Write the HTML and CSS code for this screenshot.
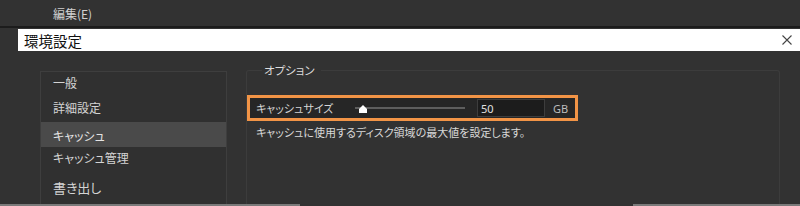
FILE: index.html
```html
<!DOCTYPE html>
<html lang="ja">
<head>
  <meta charset="UTF-8">
  <title>環境設定</title>
  <link rel="stylesheet" href="styles.css">
</head>
<body>
  <div class="menubar">
    <span class="menu-item">編集(E)</span>
  </div>
  <div class="titlebar">
    <span class="title">環境設定</span>
    <svg class="close" width="10" height="10" viewBox="0 0 10 10">
      <path d="M0.5 0.5 L9.5 9.5 M9.5 0.5 L0.5 9.5" stroke="#444" stroke-width="1.1" fill="none"/>
    </svg>
  </div>
  <div class="main">
    <ul class="nav">
      <li>一般</li>
      <li>詳細設定</li>
      <li class="selected">キャッシュ</li>
      <li>キャッシュ管理</li>
      <li class="big">書き出し</li>
    </ul>
    <fieldset class="options">
      <legend>オプション</legend>
      <div class="setting highlight">
        <span class="setting-label">キャッシュサイズ</span>
        <div class="slider">
          <svg class="thumb" width="8" height="8" viewBox="0 0 8 8">
            <polygon points="4,0 8,4 8,8 0,8 0,4" fill="#fff"/>
          </svg>
        </div>
        <input class="value" type="text" value="50">
        <span class="unit">GB</span>
      </div>
      <p class="desc">キャッシュに使用するディスク領域の最大値を設定します。</p>
    </fieldset>
  </div>
  <div class="bottomline">
    <span class="seg left"></span>
    <span class="seg right"></span>
  </div>
</body>
</html>
```

FILE: styles.css
```css
body {
  margin: 0;
  height: 206px;
  overflow: hidden;
  background: #323232;
  font-family: "Noto Sans CJK JP", "Noto Sans", sans-serif;
  font-feature-settings: "palt";
  color: #d4d4d4;
  display: flex;
  flex-direction: column;
}
.menubar {
  height: 26px;
  border-bottom: 2px solid #1c1c1c;
  display: flex;
  align-items: center;
  padding-left: 53px;
  font-size: 12px;
  color: #d0d0d0;
}
.titlebar {
  margin: 1px 0 0 18px;
  height: 22px;
  background: #fff;
  display: flex;
  align-items: center;
  justify-content: space-between;
  padding: 0 8px 0 6px;
}
.title {
  font-size: 14.5px;
  color: #111;
}
.main {
  flex: 1;
  min-height: 0;
  display: flex;
  gap: 19px;
  padding: 12px 20px 0 40px;
}
.nav {
  list-style: none;
  margin: 8px 0 0 0;
  padding: 0;
  width: 185px;
  border: 1px solid #3e3e3e;
  border-bottom: none;
  background: #303030;
  font-size: 12px;
}
.nav li {
  height: 25px;
  line-height: 22px;
  padding-left: 12px;
}
.nav li.selected {
  background: #4a4a4a;
  line-height: 28px;
  color: #e4e4e4;
}
.nav li.big {
  font-size: 13px;
  line-height: 32px;
}
.options {
  flex: 1;
  margin: 0;
  padding: 0;
  border: 1px solid #3c3c3c;
  border-bottom: none;
  border-radius: 3px 3px 0 0;
  min-width: 0;
}
.options legend {
  margin-left: 15px;
  padding: 0 6px 0 2px;
  font-size: 11.5px;
  line-height: 14px;
  color: #dcdcdc;
}
.highlight {
  margin-top: 18px;
  width: 331px;
  height: 26px;
  box-sizing: border-box;
  border: 3px solid #f29446;
  background: #262626;
  display: flex;
  align-items: center;
  padding-left: 6px;
  font-size: 11px;
}
.setting-label {
  width: 99px;
}
.slider {
  position: relative;
  width: 110px;
  height: 18px;
}
.slider::before {
  content: "";
  position: absolute;
  left: 0;
  right: 0;
  top: 8px;
  height: 2px;
  background: #5e5e5e;
}
.thumb {
  position: absolute;
  left: 4px;
  top: 6px;
}
.value {
  margin-left: 12px;
  width: 68px;
  height: 18px;
  box-sizing: border-box;
  background: #1c1c1c;
  border: 1px solid #3d3d3d;
  color: #e0e0e0;
  font-family: "Noto Sans", sans-serif;
  font-size: 11px;
  padding: 0 3px;
  outline: none;
}
.unit {
  margin-left: 8px;
  font-family: "Noto Sans", sans-serif;
  color: #bdbdbd;
}
.desc {
  margin: 4px 0 0 9px;
  font-size: 11px;
  line-height: 14px;
  color: #d8d8d8;
}
.bottomline {
  height: 2px;
  display: flex;
  justify-content: space-between;
}
.seg {
  background: #7a7a7a;
}
.seg.left {
  width: 300px;
}
.seg.right {
  width: 167px;
}
```
